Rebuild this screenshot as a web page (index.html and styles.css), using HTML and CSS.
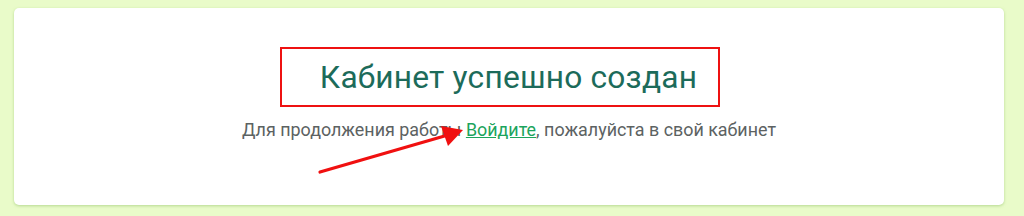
FILE: index.html
```html
<!DOCTYPE html>
<html lang="ru">
<head>
<meta charset="utf-8">
<link rel="stylesheet" href="styles.css">
</head>
<body>
<div class="card">
  <div class="highlight">
    <h1 class="title">Кабинет успешно создан</h1>
  </div>
  <p class="subtitle">Для продолжения работы <a class="link" href="#">Войдите</a>, пожалуйста в свой кабинет</p>
  <svg class="arrow" width="1024" height="216" viewBox="0 0 1024 216">
    <line x1="320" y1="172" x2="448" y2="135" stroke="#f01010" stroke-width="3.2" stroke-linecap="round"/>
    <polygon points="463,130 441,126 448,146" fill="#f01010"/>
  </svg>
</div>
</body>
</html>
```
FILE: styles.css
```css
html, body {
  margin: 0;
  padding: 0;
}
body {
  background: #e9fbc9;
  width: 1024px;
  height: 216px;
  overflow: hidden;
  padding-top: 8px;
  box-sizing: border-box;
  font-family: Roboto, "Liberation Sans", Arial, sans-serif;
}
.card {
  margin: 0 20px 0 14px;
  height: 197px;
  background: #ffffff;
  border-radius: 5px;
  box-shadow: 0 1px 3px rgba(140, 190, 100, 0.55);
  display: flex;
  flex-direction: column;
  align-items: center;
  padding-top: 39px;
  box-sizing: border-box;
}
.highlight {
  border: 2px solid #ee1111;
  padding: 0 21px 0 38px;
  margin-right: 18px;
  height: 60px;
  box-sizing: border-box;
  display: flex;
  align-items: center;
}
.title {
  margin: 0;
  font-size: 31.7px;
  font-weight: 400;
  color: #1c6b5a;
  letter-spacing: 0.2px;
}
.subtitle {
  margin: 12px 0 0;
  font-size: 17.9px;
  line-height: 22px;
  color: #5c6262;
}
.link {
  color: #1ba45c;
  text-decoration: underline;
}
.arrow {
  position: absolute;
  left: 0;
  top: 0;
  pointer-events: none;
}
```
